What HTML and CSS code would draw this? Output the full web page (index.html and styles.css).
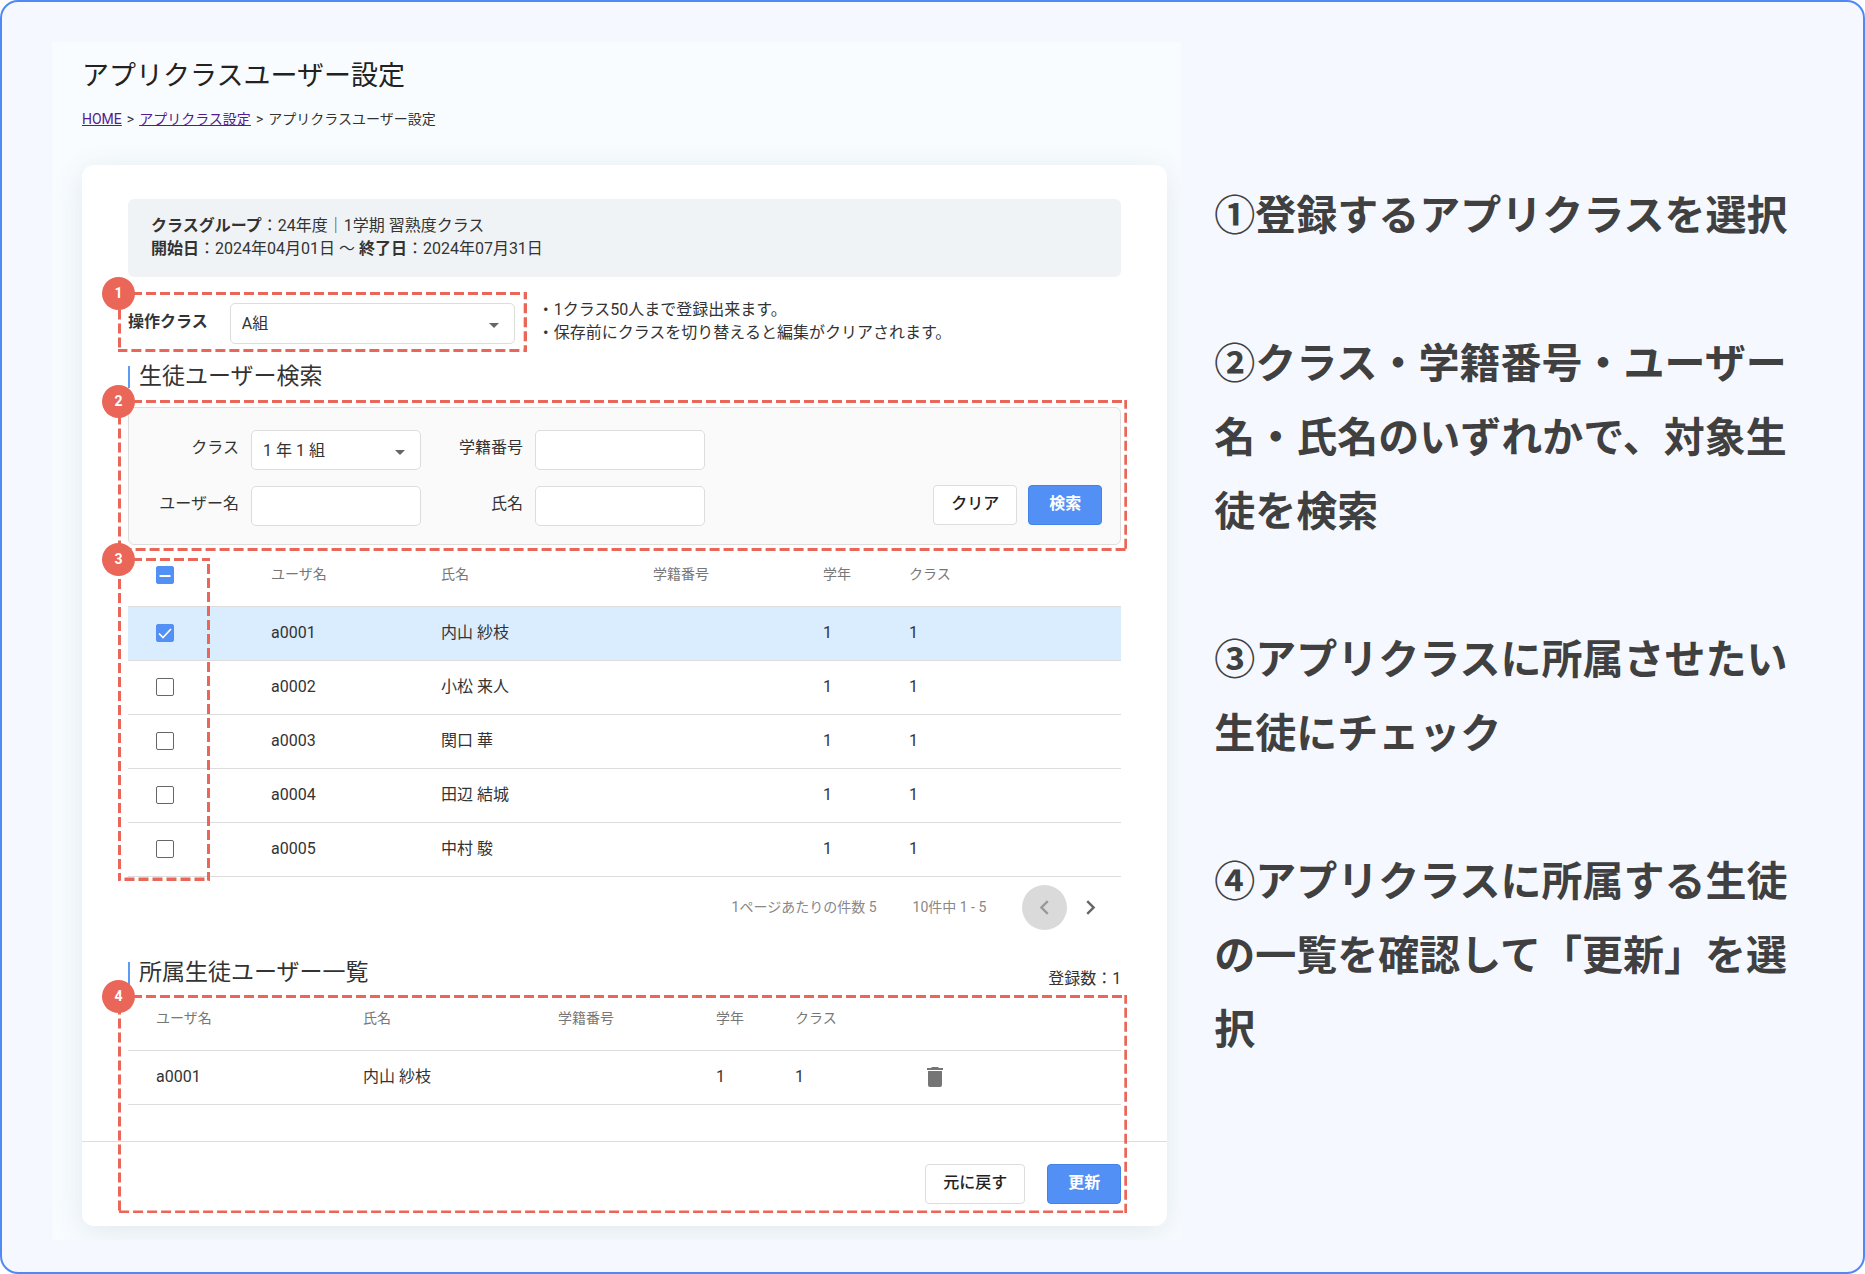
FILE: index.html
```html
<!DOCTYPE html>
<html lang="ja">
<head>
    <meta charset="UTF-8">
    <meta name="viewport" content="width=device-width, initial-scale=1.0">
    <title>アプリクラスユーザー設定</title>
    <link rel="stylesheet" href="styles.css">
</head>
<body>
    <div class="frame">
        <main class="panel">
            <h1>アプリクラスユーザー設定</h1>
            <nav class="breadcrumb">
                <a href="#">HOME</a>
                <span>&gt;</span>
                <a href="#">アプリクラス設定</a>
                <span>&gt;</span>
                <span>アプリクラスユーザー設定</span>
            </nav>

            <div class="card">
                <div class="info">
                    <p><b>クラスグループ</b>：24年度｜1学期 習熟度クラス</p>
                    <p><b>開始日</b>：2024年04月01日 ～ <b>終了日</b>：2024年07月31日</p>
                </div>

                <div class="target">
                    <div class="target-class">
                        <label for="target">操作クラス</label>
                        <div class="select">
                            <select id="target"><option>A組</option></select>
                            <svg class="caret" viewBox="0 0 10 5"><path d="M0 0h10L5 5z"/></svg>
                        </div>
                        <div class="callout callout-1">
                            <svg><rect width="100%" height="100%"/></svg>
                            <span class="badge">1</span>
                        </div>
                    </div>
                    <div class="notice">
                        <p>・1クラス50人まで登録出来ます。</p>
                        <p>・保存前にクラスを切り替えると編集がクリアされます。</p>
                    </div>
                </div>

                <h2 class="search-title">生徒ユーザー検索</h2>
                <form class="search">
                    <label for="class">クラス</label>
                    <div class="select">
                        <select id="class"><option>1 年 1 組</option></select>
                        <svg class="caret" viewBox="0 0 10 5"><path d="M0 0h10L5 5z"/></svg>
                    </div>
                    <label for="number">学籍番号</label>
                    <input type="text" id="number">
                    <label for="user" class="new-row">ユーザー名</label>
                    <input type="text" id="user">
                    <label for="name">氏名</label>
                    <input type="text" id="name">
                    <div class="search-buttons">
                        <button type="button" class="btn">クリア</button>
                        <button type="button" class="btn btn-primary">検索</button>
                    </div>
                    <div class="callout callout-2">
                        <svg><rect width="100%" height="100%"/></svg>
                        <span class="badge">2</span>
                    </div>
                </form>

                <div class="students">
                    <table>
                        <colgroup>
                            <col class="col-check"><col class="col-user"><col class="col-name"><col class="col-number"><col class="col-grade"><col>
                        </colgroup>
                        <thead>
                            <tr>
                                <th><input type="checkbox" class="partial" aria-label="すべて選択"></th>
                                <th>ユーザ名</th>
                                <th>氏名</th>
                                <th>学籍番号</th>
                                <th>学年</th>
                                <th>クラス</th>
                            </tr>
                        </thead>
                        <tbody>
                            <tr class="selected">
                                <td><input type="checkbox" aria-label="a0001" checked></td>
                                <td>a0001</td><td>内山 紗枝</td><td></td><td>1</td><td>1</td>
                            </tr>
                            <tr>
                                <td><input type="checkbox" aria-label="a0002"></td>
                                <td>a0002</td><td>小松 来人</td><td></td><td>1</td><td>1</td>
                            </tr>
                            <tr>
                                <td><input type="checkbox" aria-label="a0003"></td>
                                <td>a0003</td><td>関口 華</td><td></td><td>1</td><td>1</td>
                            </tr>
                            <tr>
                                <td><input type="checkbox" aria-label="a0004"></td>
                                <td>a0004</td><td>田辺 結城</td><td></td><td>1</td><td>1</td>
                            </tr>
                            <tr>
                                <td><input type="checkbox" aria-label="a0005"></td>
                                <td>a0005</td><td>中村 駿</td><td></td><td>1</td><td>1</td>
                            </tr>
                        </tbody>
                    </table>
                    <div class="callout callout-3">
                        <svg><rect width="100%" height="100%"/></svg>
                        <span class="badge">3</span>
                    </div>
                </div>

                <div class="pager">
                    <span>1ページあたりの件数 5</span>
                    <span>10件中 1 - 5</span>
                    <div class="pager-buttons">
                        <button type="button" class="page-btn" aria-label="前のページ" disabled>
                            <svg viewBox="0 0 24 24"><path d="M15.41 7.41L14 6l-6 6 6 6 1.41-1.41L10.83 12z"/></svg>
                        </button>
                        <button type="button" class="page-btn" aria-label="次のページ">
                            <svg viewBox="0 0 24 24"><path d="M10 6L8.59 7.41 13.17 12l-4.58 4.59L10 18l6-6z"/></svg>
                        </button>
                    </div>
                </div>

                <div class="member-head">
                    <h2>所属生徒ユーザー一覧</h2>
                    <p>登録数：1</p>
                </div>
                <div class="members">
                    <table>
                        <colgroup>
                            <col class="col-m-user"><col class="col-m-name"><col class="col-m-number"><col class="col-m-grade"><col class="col-m-class"><col>
                        </colgroup>
                        <thead>
                            <tr>
                                <th>ユーザ名</th>
                                <th>氏名</th>
                                <th>学籍番号</th>
                                <th>学年</th>
                                <th>クラス</th>
                                <th></th>
                            </tr>
                        </thead>
                        <tbody>
                            <tr>
                                <td>a0001</td><td>内山 紗枝</td><td></td><td>1</td><td>1</td>
                                <td>
                                    <button type="button" class="delete" aria-label="削除">
                                        <svg viewBox="0 0 16 20"><path d="M5 0h6l1 1h4v2H0V1h4z"/><path d="M1 4h14v14a2 2 0 0 1-2 2H3a2 2 0 0 1-2-2z"/></svg>
                                    </button>
                                </td>
                            </tr>
                        </tbody>
                    </table>
                    <div class="actions">
                        <button type="button" class="btn">元に戻す</button>
                        <button type="button" class="btn btn-primary">更新</button>
                    </div>
                    <div class="callout callout-4">
                        <svg><rect width="100%" height="100%"/></svg>
                        <span class="badge">4</span>
                    </div>
                </div>
            </div>
        </main>

        <aside class="steps">
            <p>①登録するアプリクラスを選択</p>
            <p>②クラス・学籍番号・ユーザー名・氏名のいずれかで、対象生徒を検索</p>
            <p>③アプリクラスに所属させたい生徒にチェック</p>
            <p>④アプリクラスに所属する生徒の一覧を確認して「更新」を選択</p>
        </aside>
    </div>
</body>
</html>
```
FILE: styles.css
```css
* {
    box-sizing: border-box;
}
body {
    margin: 0;
    font-family: Roboto, "Noto Sans CJK JP", sans-serif;
    font-size: 16px;
    line-height: 23px;
    color: #333;
    background: white;
}
h1, h2, p {
    margin: 0;
    font-weight: 400;
}
.frame {
    min-height: 100vh;
    display: grid;
    grid-template-columns: 47fr 25fr;
    gap: 33px;
    padding: 40px 48px 32px 50px;
    border: 2px solid #5089f4;
    border-radius: 18px;
    background: #f5f8ff;
}

/* left: settings screen */
.panel {
    padding: 14px 14px 14px 30px;
    background: #f8fcff;
    overflow: hidden;
}
h1 {
    font-size: 27px;
    line-height: 40px;
    color: #222;
}
.breadcrumb {
    display: flex;
    gap: 5px;
    margin-top: 13px;
    font-size: 14px;
    line-height: 20px;
}
.breadcrumb a {
    color: #551a8b;
}
.card {
    margin-top: 36px;
    padding: 34px 46px 0;
    border-radius: 12px;
    background: white;
    box-shadow: 0 6px 30px rgba(60, 90, 100, 0.12);
}
.info {
    padding: 15px 23px 17px;
    border-radius: 6px;
    background: #f0f3f6;
}
.target {
    display: flex;
    gap: 23px;
    margin-top: 25px;
}
.target-class {
    position: relative;
    display: flex;
    align-items: center;
    gap: 22px;
}
.target-class label {
    padding-bottom: 4px;
    font-weight: 700;
}
.target-class .select {
    width: 285px;
}
.target-class select {
    height: 41px;
}
.notice {
    margin-top: -4px;
}
h2 {
    padding-left: 9px;
    border-left: 2px solid #5b9af5;
    font-size: 23px;
    line-height: 22px;
}
.search-title {
    margin: 22px 0 19px;
}

/* form controls */
.select {
    position: relative;
}
select,
input[type="text"] {
    width: 100%;
    height: 40px;
    padding: 0 11px;
    border: 1px solid #ddd;
    border-radius: 5px;
    background: white;
    font: inherit;
    color: inherit;
    appearance: none;
}
.caret {
    position: absolute;
    right: 16px;
    top: 50%;
    width: 10px;
    height: 5px;
    fill: #666;
}
.btn {
    height: 40px;
    padding: 0 17px 3px;
    border: 1px solid #ddd;
    border-radius: 4px;
    background: white;
    font: inherit;
    font-weight: 500;
    color: #222;
}
.btn-primary {
    padding: 0 20px 3px;
    border-color: #4183e6;
    background: #5290f5;
    color: white;
    font-weight: 700;
}
input[type="checkbox"] {
    display: block;
    width: 18px;
    height: 18px;
    margin: 0;
    border: 1px solid #666;
    border-radius: 2px;
    background: white center / 100% no-repeat;
    appearance: none;
}
input[type="checkbox"]:checked {
    border-color: #5290f5;
    background-color: #5290f5;
    background-image: url("data:image/svg+xml,%3Csvg xmlns='http://www.w3.org/2000/svg' viewBox='0 0 16 16'%3E%3Cpath d='M2 8.5l4 4 8-8.5' fill='none' stroke='white' stroke-width='1.6'/%3E%3C/svg%3E");
}
input[type="checkbox"].partial {
    border-color: #5290f5;
    background-color: #5290f5;
    background-image: url("data:image/svg+xml,%3Csvg xmlns='http://www.w3.org/2000/svg' viewBox='0 0 16 16'%3E%3Cpath d='M2.5 9h11' stroke='white' stroke-width='2'/%3E%3C/svg%3E");
}

/* search box */
.search {
    position: relative;
    display: grid;
    grid-template-columns: 122px 170px 114px 170px 1fr;
    gap: 16px 0;
    align-items: center;
    padding: 22px 18px 18px 0;
    border: 1px solid #ddd;
    border-radius: 6px;
    background: #fafafa;
}
.search label {
    padding: 0 12px 5px 0;
    text-align: right;
}
.search .new-row {
    grid-column: 1;
}
.search .search-buttons {
    grid-column: 5;
    grid-row: 2;
    display: flex;
    justify-content: flex-end;
    gap: 11px;
    margin-top: -3px;
}

/* tables */
table {
    width: 100%;
    table-layout: fixed;
    border-collapse: collapse;
}
th, td {
    padding: 0;
    border-bottom: 1px solid #ddd;
    text-align: left;
}
th {
    height: 61px;
    padding-bottom: 2px;
    font-size: 14px;
    font-weight: 400;
    color: #777;
}
td {
    height: 54px;
    padding-bottom: 2px;
}
.selected {
    background: #daedfe;
}
.students {
    position: relative;
}
.students th:first-child,
.students td:first-child,
.members th:first-child,
.members td:first-child {
    padding-left: 28px;
}
.students th:first-child,
.students td:first-child {
    padding-bottom: 0;
}
.col-check { width: 143px; }
.col-user { width: 170px; }
.col-name { width: 212px; }
.col-number { width: 170px; }
.col-grade { width: 86px; }
.col-m-user { width: 235px; }
.col-m-name { width: 195px; }
.col-m-number { width: 158px; }
.col-m-grade { width: 79px; }
.col-m-class { width: 132px; }

.pager {
    display: flex;
    justify-content: flex-end;
    align-items: center;
    gap: 36px;
    margin-top: 8px;
    padding-right: 8px;
    font-size: 14px;
    color: #888;
}
.pager-buttons {
    display: flex;
    gap: 1px;
}
.page-btn {
    width: 45px;
    height: 45px;
    padding: 8px;
    border: none;
    border-radius: 50%;
    background: none;
    fill: #666;
}
.page-btn:disabled {
    background: #dadada;
    fill: #999;
}
.page-btn svg {
    display: block;
}

/* registered students */
.member-head {
    display: flex;
    justify-content: space-between;
    height: 28px;
    margin-top: 32px;
}
.member-head p {
    align-self: flex-end;
}
.members {
    position: relative;
}
.delete {
    display: block;
    padding: 0;
    border: none;
    background: none;
}
.delete svg {
    display: block;
    width: 16px;
    height: 20px;
    fill: #757575;
}
.actions {
    display: flex;
    justify-content: flex-end;
    gap: 22px;
    margin: 36px -46px 0;
    padding: 22px 46px;
    border-top: 1px solid #ddd;
}

/* numbered dashed frames drawn over the screen */
.callout {
    position: absolute;
    left: -10px;
    pointer-events: none;
}
.callout svg {
    display: block;
    width: 100%;
    height: 100%;
    fill: none;
    stroke: #ea6658;
    stroke-width: 6px;
    stroke-dasharray: 10 4;
}
.callout-1 {
    top: -10px;
    right: -12px;
    bottom: -8px;
}
.callout-2 {
    top: -8px;
    left: -11px;
    right: -7px;
    bottom: -7px;
}
.callout-3 {
    top: 13px;
    bottom: -4px;
    width: 92px;
}
.callout-4 {
    top: 5px;
    right: -6px;
    bottom: 13px;
}
.badge {
    position: absolute;
    top: -15px;
    left: -16px;
    width: 33px;
    height: 33px;
    border-radius: 50%;
    background: #ea6658;
    color: white;
    font-size: 14px;
    font-weight: 700;
    line-height: 33px;
    text-align: center;
}

/* right: steps */
.steps {
    display: flex;
    flex-direction: column;
    gap: 74px;
    padding-top: 133px;
    font-family: "Noto Sans CJK JP", sans-serif;
    font-size: 41px;
    line-height: 74px;
    color: #404040;
}
.steps p {
    font-weight: 700;
}
```
